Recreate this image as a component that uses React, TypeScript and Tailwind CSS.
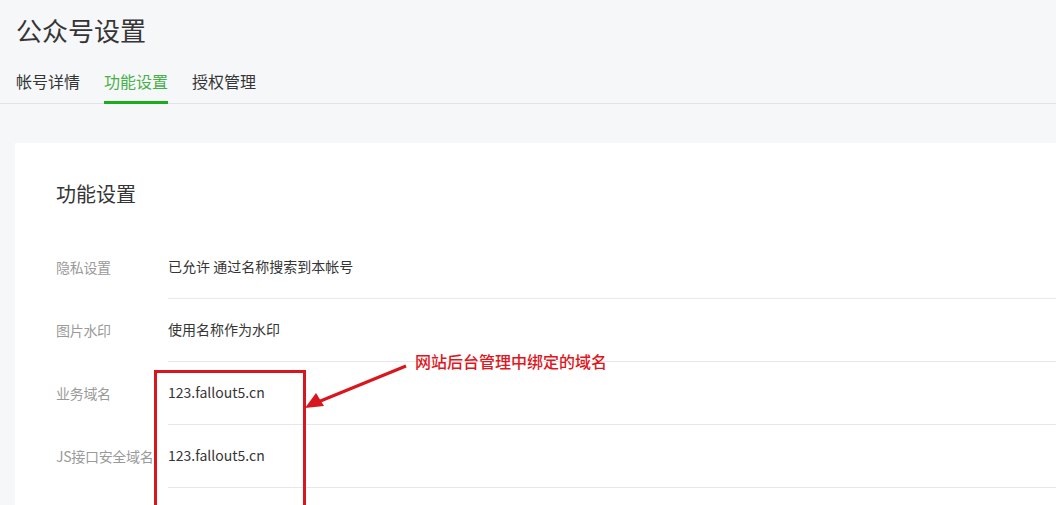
import React from "react";

const rows = [
  { label: "隐私设置", value: "已允许 通过名称搜索到本帐号" },
  { label: "图片水印", value: "使用名称作为水印" },
  { label: "业务域名", value: "123.fallout5.cn" },
  { label: "JS接口安全域名", value: "123.fallout5.cn" },
  { label: "", value: "" },
];

export default function App() {
  return (
    <div
      className="relative h-[505px] w-[1056px] overflow-hidden bg-[#f6f7f9] text-[#353535]"
      style={{ fontFamily: '"Microsoft YaHei", "Noto Sans CJK SC", "Noto Sans", sans-serif' }}
    >
      <div className="pl-4 pt-[12px]">
        <h1 className="text-[26px] leading-[36px] font-normal text-[#353535]">公众号设置</h1>
      </div>
      <div className="mt-[21px] flex gap-6 border-b border-[#e2e3e8] pl-4">
        <div className="pb-[10px] text-[16px] leading-[24px] text-[#353535]">帐号详情</div>
        <div className="-mb-px border-b-[3px] border-[#1aad19] pb-[8px] text-[16px] leading-[24px] text-[#46b04a]">
          功能设置
        </div>
        <div className="pb-[10px] text-[16px] leading-[24px] text-[#353535]">授权管理</div>
      </div>
      <div className="ml-[15px] mt-[39px] h-[400px] bg-white pl-[41px] pt-[37px]">
        <h2 className="text-[20px] leading-[28px] font-normal text-[#353535]">功能设置</h2>
        <div className="mt-[28px]">
          {rows.map((r, i) => (
            <div key={i} className="flex">
              <div className="flex h-[63px] w-[112px] items-center whitespace-nowrap text-[14px] tracking-[-0.3px] text-[#9a9a9a]">
                {r.label}
              </div>
              <div className="flex h-[63px] flex-1 items-center border-b border-[#e7e7eb] pb-px text-[14px] text-[#353535]">
                {r.value}
              </div>
            </div>
          ))}
        </div>
      </div>

      {/* annotation overlay */}
      <div className="absolute left-[154px] top-[370px] h-[160px] w-[152px] border-[3px] border-[#d8161d]" />
      <svg className="absolute left-0 top-0" width="1056" height="505">
        <line x1="406" y1="366" x2="318" y2="402" stroke="#d8161d" strokeWidth="3" />
        <polygon points="305,408 316,393 324,406" fill="#d8161d" />
      </svg>
      <div className="absolute left-[415px] top-[350px] text-[16px] leading-[22px] font-medium text-[#e0161d]">
        网站后台管理中绑定的域名
      </div>
    </div>
  );
}
